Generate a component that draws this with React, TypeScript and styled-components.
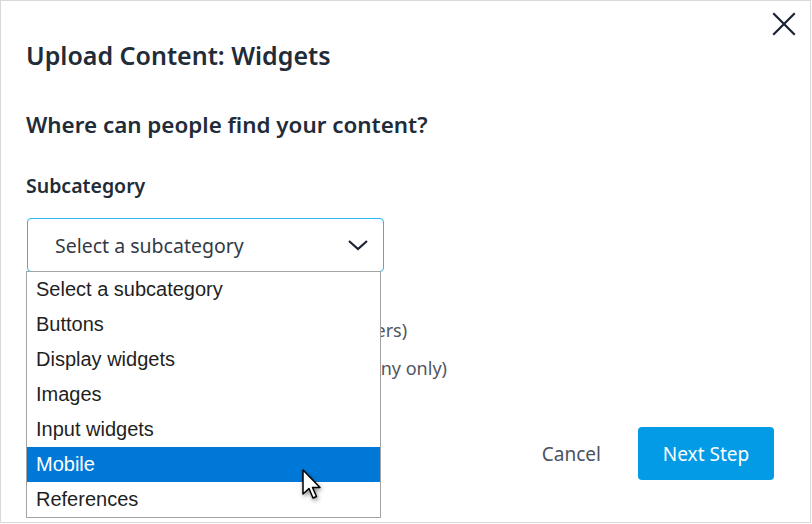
import React from 'react';
import styled, { createGlobalStyle } from 'styled-components';

const GlobalStyles = createGlobalStyle`
  html, body {
    margin: 0;
    padding: 0;
    background: #ffffff;
  }
  body {
    font-family: 'Noto Sans', 'Open Sans', sans-serif;
    color: #222b38;
  }
  * {
    box-sizing: border-box;
  }
`;

const Dialog = styled.main`
  position: relative;
  width: 811px;
  height: 523px;
  border: 1px solid #d9d9d9;
  background: #fff;
  padding: 38px 36px 0 25px;
  display: flex;
  flex-direction: column;
`;

const CloseButton = styled.button`
  position: absolute;
  top: 11px;
  right: 14px;
  width: 24px;
  height: 24px;
  padding: 0;
  border: 0;
  background: transparent;
  display: flex;
  align-items: center;
  justify-content: center;
  cursor: pointer;
`;

const Title = styled.h1`
  margin: 0;
  font-size: 25px;
  line-height: 32px;
  font-weight: 600;
  color: #222b38;
`;

const Question = styled.h2`
  margin: 40px 0 0;
  font-size: 22.4px;
  line-height: 28px;
  font-weight: 600;
  color: #222b38;
`;

const FieldLabel = styled.label`
  display: block;
  margin: 34px 0 0;
  font-size: 19.5px;
  line-height: 26px;
  font-weight: 600;
  color: #222b38;
`;

const SelectWrap = styled.div`
  position: relative;
  margin-top: 19px;
  margin-left: 1px;
  width: 357px;
`;

const SelectBox = styled.div`
  height: 54px;
  border: 1px solid #29b6f6;
  border-radius: 4px;
  display: flex;
  align-items: center;
  justify-content: space-between;
  padding: 0 14px 0 27px;
  font-size: 19.5px;
  color: #333a45;
`;

const OptionList = styled.ul`
  position: absolute;
  top: 53px;
  left: -1px;
  width: 355px;
  margin: 0;
  padding: 0;
  list-style: none;
  background: #fff;
  border: 1px solid #a3a3a3;
  z-index: 2;
`;

const OptionItem = styled.li<{ $active?: boolean }>`
  height: 35px;
  padding: 0 9px;
  display: flex;
  align-items: center;
  font-family: 'Liberation Sans', Arial, sans-serif;
  font-size: 20px;
  color: ${(p) => (p.$active ? '#ffffff' : '#1f1f1f')};
  background: ${(p) => (p.$active ? '#0078d7' : 'transparent')};
`;

const RadioGroup = styled.div`
  margin-top: 45px;
  padding-left: 34px;
  display: flex;
  flex-direction: column;
  gap: 12px;
`;

const RadioRow = styled.label`
  display: flex;
  align-items: center;
  gap: 10px;
  height: 26px;
  font-size: 18px;
  color: #4f5662;
`;

const RadioDot = styled.span`
  width: 18px;
  height: 18px;
  border-radius: 50%;
  border: 1px solid #9aa1ab;
`;

const Footer = styled.div`
  margin-top: auto;
  margin-bottom: 42px;
  display: flex;
  justify-content: flex-end;
  align-items: center;
  gap: 37px;
`;

const TextButton = styled.button`
  border: 0;
  background: transparent;
  padding: 0;
  font-family: 'Noto Sans', sans-serif;
  font-size: 19px;
  color: #4a5260;
  cursor: pointer;
`;

const PrimaryButton = styled.button`
  width: 136px;
  height: 53px;
  border: 0;
  border-radius: 4px;
  background: #039be5;
  color: #fff;
  font-family: 'Noto Sans', sans-serif;
  font-size: 19px;
  cursor: pointer;
`;

const Pointer = styled.svg`
  position: absolute;
  left: 301px;
  top: 468px;
  z-index: 3;
  filter: drop-shadow(1px 2px 2px rgba(0, 0, 0, 0.45));
`;

const options = [
  'Select a subcategory',
  'Buttons',
  'Display widgets',
  'Images',
  'Input widgets',
  'Mobile',
  'References',
];

export default function App() {
  return (
    <>
      <GlobalStyles />
      <Dialog>
        <CloseButton aria-label="Close">
          <svg width="24" height="24" viewBox="0 0 24 24" fill="none" stroke="#1a2233" strokeWidth="2.2" strokeLinecap="square">
            <path d="M2 2 L22 22 M22 2 L2 22" />
          </svg>
        </CloseButton>

        <Title>Upload Content: Widgets</Title>
        <Question>Where can people find your content?</Question>
        <FieldLabel>Subcategory</FieldLabel>

        <SelectWrap>
          <SelectBox>
            <span>Select a subcategory</span>
            <svg width="22" height="22" viewBox="0 0 22 22" fill="none" stroke="#1a2233" strokeWidth="2.2">
              <path d="M2 7 L11 15 L20 7" />
            </svg>
          </SelectBox>
          <OptionList>
            {options.map((o) => (
              <OptionItem key={o} $active={o === 'Mobile'}>
                {o}
              </OptionItem>
            ))}
          </OptionList>
        </SelectWrap>

        <RadioGroup>
          <RadioRow>
            <RadioDot />
            Public listing (visible to all developers)
          </RadioRow>
          <RadioRow>
            <RadioDot />
            Private listing (visible to my company only)
          </RadioRow>
        </RadioGroup>

        <Footer>
          <TextButton>Cancel</TextButton>
          <PrimaryButton>Next Step</PrimaryButton>
        </Footer>

        <Pointer width="20" height="32" viewBox="0 0 20 32">
          <path d="M1 1 L1 25 L7 19.5 L11 29 L14.5 27.5 L10.5 18.5 L18 18.5 Z" fill="#fff" stroke="#000" strokeWidth="1.5" strokeLinejoin="round" />
        </Pointer>
      </Dialog>
    </>
  );
}
